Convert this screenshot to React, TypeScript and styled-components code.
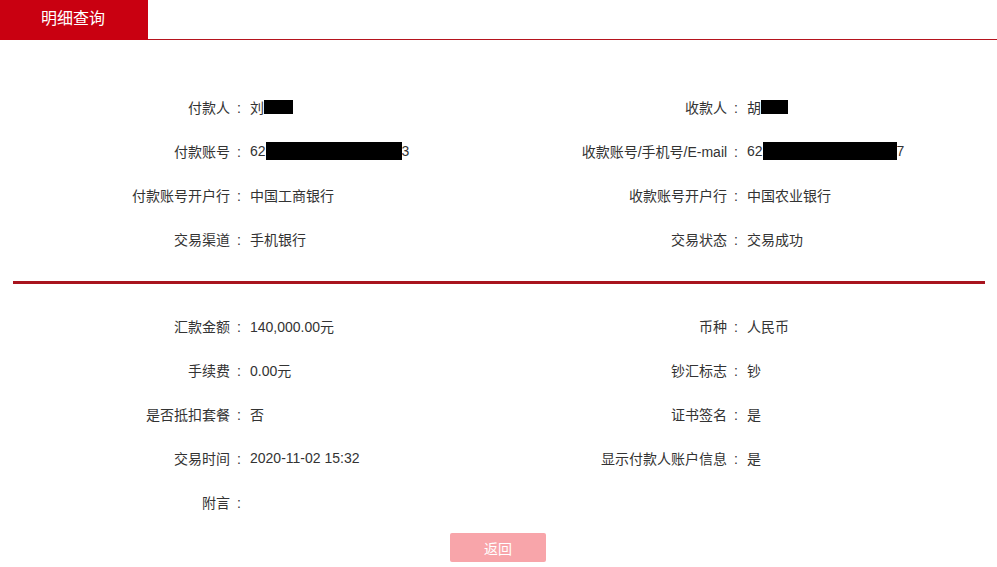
import styled, { createGlobalStyle } from 'styled-components'

const GlobalStyle = createGlobalStyle`
  html, body {
    margin: 0;
    padding: 0;
    background: #FFFFFF;
  }
  body {
    font-family: "Liberation Sans", "Noto Sans CJK SC", sans-serif;
    font-size: 14px;
    color: #333333;
  }
`

export const Page = styled.div`
  width: 997px;
  height: 567px;
  overflow: hidden;
  background: #FFFFFF;
`

export const TabBar = styled.div`
  display: flex;
  align-items: flex-end;
  height: 40px;
  border-bottom: 1px solid #B5141E;
  box-sizing: border-box;
`

export const Tab = styled.div`
  width: 148px;
  height: 40px;
  margin-bottom: -1px;
  background: #C90011;
  color: #FFFFFF;
  font-size: 16px;
  line-height: 38px;
  padding-left: 41px;
  box-sizing: border-box;
`

export const Section = styled.div<{ $top: number }>`
  display: grid;
  grid-template-columns: 244px 249px 248px 1fr;
  grid-auto-rows: 44px;
  align-items: center;
  padding-top: ${(p) => p.$top}px;
`

export const Label = styled.div`
  text-align: right;
  white-space: nowrap;
`

export const Colon = styled.span`
  margin-left: 7px;
  margin-right: 3px;
`

export const Value = styled.div`
  padding-left: 6px;
  white-space: nowrap;
  display: flex;
  align-items: center;
`

export const Mask = styled.span<{ $w: number; $h: number }>`
  display: inline-block;
  width: ${(p) => p.$w}px;
  height: ${(p) => p.$h}px;
  background: #000000;
`

export const Divider = styled.div`
  margin: 20px 12px 0 13px;
  height: 3px;
  background: #A8141E;
`

export const Footer = styled.div`
  display: flex;
  justify-content: center;
  padding-top: 9px;
  padding-right: 1px;
`

export const BackButton = styled.button`
  width: 96px;
  height: 29px;
  border: none;
  border-radius: 2px;
  background: #F8A5AA;
  color: #FFFFFF;
  font-family: "Noto Sans CJK SC", sans-serif;
  font-size: 14px;
  padding: 0;
`

type Row = [string, React.ReactNode, string, React.ReactNode]

const partyRows: Row[] = [
  ['付款人', <>刘<Mask $w={29} $h={14} /></>, '收款人', <>胡<Mask $w={27} $h={14} /></>],
  ['付款账号', <>62<Mask $w={136} $h={18} />3</>, '收款账号/手机号/E-mail', <>62<Mask $w={134} $h={18} />7</>],
  ['付款账号开户行', '中国工商银行', '收款账号开户行', '中国农业银行'],
  ['交易渠道', '手机银行', '交易状态', '交易成功'],
]

const detailRows: Row[] = [
  ['汇款金额', '140,000.00元', '币种', '人民币'],
  ['手续费', '0.00元', '钞汇标志', '钞'],
  ['是否抵扣套餐', '否', '证书签名', '是'],
  ['交易时间', '2020-11-02 15:32', '显示付款人账户信息', '是'],
  ['附言', '', '', ''],
]

const Rows = ({ rows }: { rows: Row[] }) => (
  <>
    {rows.map(([l1, v1, l2, v2], i) => (
      <div key={i} style={{ display: 'contents' }}>
        <Label>{l1}<Colon>:</Colon></Label>
        <Value>{v1}</Value>
        <Label>{l2 && <>{l2}<Colon>:</Colon></>}</Label>
        <Value>{v2}</Value>
      </div>
    ))}
  </>
)

export default function App() {
  return (
    <Page>
      <GlobalStyle />
      <TabBar>
        <Tab>明细查询</Tab>
      </TabBar>

      <Section $top={45}>
        <Rows rows={partyRows} />
      </Section>

      <Divider />

      <Section $top={20}>
        <Rows rows={detailRows} />
      </Section>

      <Footer>
        <BackButton>返回</BackButton>
      </Footer>
    </Page>
  )
}
